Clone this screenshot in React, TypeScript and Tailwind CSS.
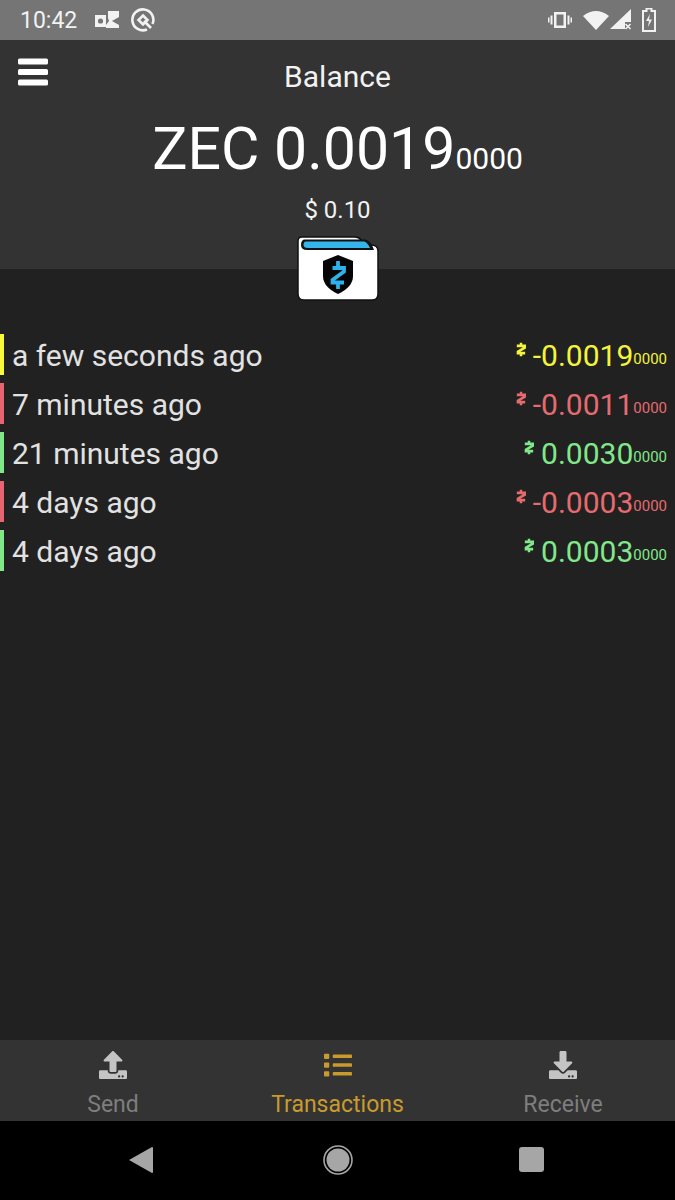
import React from 'react';
import { FaDownload, FaList, FaUpload } from 'react-icons/fa';

type Tx = { when: string; amount: string; bar: string; text: string };

const txs: Tx[] = [
  { when: 'a few seconds ago', amount: '-0.0019', bar: 'bg-[#f8f83c]', text: 'text-[#f4f43c]' },
  { when: '7 minutes ago', amount: '-0.0011', bar: 'bg-[#e66570]', text: 'text-[#e56b70]' },
  { when: '21 minutes ago', amount: '0.0030', bar: 'bg-[#81e88a]', text: 'text-[#81e88a]' },
  { when: '4 days ago', amount: '-0.0003', bar: 'bg-[#e66570]', text: 'text-[#e56b70]' },
  { when: '4 days ago', amount: '0.0003', bar: 'bg-[#81e88a]', text: 'text-[#81e88a]' },
];

const ZMark = ({ className }: { className: string }) => (
  <svg viewBox="0 0 12 16" className={className} fill="none" stroke="currentColor">
    <path d="M6 0V3.5M6 12.5V16" strokeWidth="3" />
    <path d="M1 3.6H11V5.6L2.4 10.6V12.4H11" strokeWidth="3.2" />
  </svg>
);

const WalletLogo = () => (
  <svg viewBox="0 0 82 66" className="h-[66px] w-[82px]">
    <path d="M5 1H58Q62 1 64 4L67 9H74Q81 9 81 15V58Q81 64 75 64H7Q1 64 1 58V5Q1 1 5 1Z" fill="#fff" stroke="#111" strokeWidth="1.5" />
    <path d="M8 3.5H68Q72 4 75 9L77 14H10Q4 14 4 9Q4 3.5 8 3.5Z" fill="#111" />
    <path d="M9 5.5H67Q70 6 73 12H11Q6.5 12 6.5 9Q6.5 5.5 9 5.5Z" fill="#35b4ec" />
    <path d="M41 19L56 25V40Q56 51 41 58Q26 51 26 40V25Z" fill="#050505" />
    <path d="M41 25V31M41 47V53M35.5 32H47V35.5L35.5 44V46.5H47" fill="none" stroke="#2fb1ea" strokeWidth="3.8" />
  </svg>
);

const StatusBar = () => (
  <div className="flex h-[40px] items-center justify-between bg-[#757575] pl-[20px] pr-[19px] text-[#f2f2f2]">
    <div className="flex items-center">
      <span className="text-[23px] leading-none">10:42</span>
      <svg viewBox="0 0 24 20" className="ml-[18px] h-[20px] w-[24px]" fill="currentColor">
        <path d="M0 5H11V17H0ZM13 1H24V7L17 11 24 15V18H11V15L14 11 13 8Z" />
        <circle cx="5.5" cy="11" r="2.6" fill="#757575" />
      </svg>
      <svg viewBox="0 0 24 24" className="ml-[12px] h-[24px] w-[24px]" fill="none" stroke="currentColor" strokeWidth="2.6">
        <path d="M16 21.5A10.5 10.5 0 1 1 21.5 16" />
        <path d="M12 7.5L16.5 12L12 16.5L7.5 12Z" />
        <path d="M13 13L20 20" />
      </svg>
    </div>
    <div className="flex items-center">
      <svg viewBox="0 0 24 16" className="h-[16px] w-[24px]" fill="currentColor">
        <path d="M6 0H18V16H6ZM8.5 2.5V13.5H15.5V2.5ZM2.5 3.5H4.5V12.5H2.5ZM19.5 3.5H21.5V12.5H19.5ZM0 5.5H1.5V10.5H0ZM22.5 5.5H24V10.5H22.5Z" />
      </svg>
      <svg viewBox="0 0 26 20" className="ml-[11px] h-[20px] w-[26px]" fill="currentColor">
        <path d="M13 20L0 6Q13-4 26 6Z" />
      </svg>
      <svg viewBox="0 0 22 22" className="ml-[1px] h-[22px] w-[22px]" fill="currentColor">
        <path d="M21 0V13H15V20H0Z" />
        <path d="M15.5 15L20.5 20M20.5 15L15.5 20" stroke="currentColor" strokeWidth="1.6" />
      </svg>
      <svg viewBox="0 0 14 24" className="ml-[10px] h-[24px] w-[14px]" fill="none" stroke="currentColor" strokeWidth="2">
        <path d="M4.5 0.5H9.5V3H13V23H1V3H4.5Z" fill="none" />
        <path d="M8 6L4 13H7L6 19L10 11.5H7Z" fill="currentColor" stroke="none" />
      </svg>
    </div>
  </div>
);

const Header = () => (
  <div className="relative flex h-[229px] flex-col items-center bg-[#333333] text-[#f2f2f2]">
    <svg viewBox="0 0 30 28" className="absolute left-[18px] top-[18px] h-[28px] w-[30px]" fill="#fff">
      <rect y="0.5" width="30" height="6" rx="1.5" />
      <rect y="11" width="30" height="6" rx="1.5" />
      <rect y="21.5" width="30" height="6" rx="1.5" />
    </svg>
    <div className="mt-[18px] text-[30px] leading-[37px]">Balance</div>
    <div className="mt-[21px] flex items-baseline leading-[66px] text-white">
      <span className="text-[59px]">ZEC 0.0019</span>
      <span className="text-[30px]">0000</span>
    </div>
    <div className="mt-[5px] text-[24px] leading-[26px]">$ 0.10</div>
    <div className="mt-[13px]">
      <WalletLogo />
    </div>
  </div>
);

const TxRow = ({ tx }: { tx: Tx }) => (
  <div className="flex h-[41px] items-stretch">
    <div className={`w-[4px] ${tx.bar}`} />
    <div className="ml-[8px] flex-1 pt-[1px] text-[30px] leading-[41px] text-[#e2e2e2]">{tx.when}</div>
    <div className={`mr-[8px] flex items-baseline pt-[1px] ${tx.text}`}>
      <ZMark className="mr-[7px] mt-[7px] h-[15px] w-[10px] self-start" />
      <span className="text-[30px] leading-[41px]">{tx.amount}</span>
      <span className="-translate-y-[2px] text-[15px] leading-[41px]">0000</span>
    </div>
  </div>
);

const TabItem = ({ icon, label, active }: { icon: React.ReactNode; label: string; active?: boolean }) => (
  <div className={`flex flex-col items-center ${active ? 'text-[#c99a2e]' : 'text-[#7e7e7e]'}`}>
    <div className={`flex h-[26px] items-center ${active ? '' : 'text-[#c4c4c4]'}`}>{icon}</div>
    <div className="mt-[13px] text-[23px] leading-[27px]">{label}</div>
  </div>
);

const TabBar = () => (
  <div className="grid h-[81px] grid-cols-3 bg-[#333333] pt-[12px]">
    <div className="pl-[1px]"><TabItem icon={<FaUpload className="h-[28px] w-[28px]" />} label="Send" /></div>
    <TabItem icon={<FaList className="h-[28px] w-[28px]" />} label="Transactions" active />
    <div className="pl-[1px]"><TabItem icon={<FaDownload className="h-[28px] w-[28px]" />} label="Receive" /></div>
  </div>
);

const NavBar = () => (
  <div className="flex h-[79px] items-center justify-center bg-black">
    <div className="grid w-[585px] grid-cols-3 items-center justify-items-center pb-[2px]">
      <svg viewBox="0 0 26 28" className="-ml-[4px] h-[28px] w-[26px]" fill="#a6a6a6">
        <path d="M24 1Q25 1 25 2V26Q25 27 24 27L1 14Z" />
      </svg>
      <svg viewBox="0 0 30 30" className="h-[30px] w-[30px]">
        <circle cx="15" cy="15" r="14" fill="none" stroke="#a6a6a6" strokeWidth="1.6" />
        <circle cx="15" cy="15" r="11.5" fill="#a6a6a6" />
      </svg>
      <div className="-ml-[2px] h-[25px] w-[25px] rounded-[3px] bg-[#a6a6a6]" />
    </div>
  </div>
);

export default function App() {
  return (
    <div className="flex h-[1200px] w-[675px] flex-col overflow-hidden bg-[#212121] font-['Roboto',sans-serif]">
      <StatusBar />
      <Header />
      <div className="flex flex-1 flex-col gap-[8px] pt-[65px]">
        {txs.map((tx, i) => (
          <TxRow key={i} tx={tx} />
        ))}
      </div>
      <TabBar />
      <NavBar />
    </div>
  );
}
